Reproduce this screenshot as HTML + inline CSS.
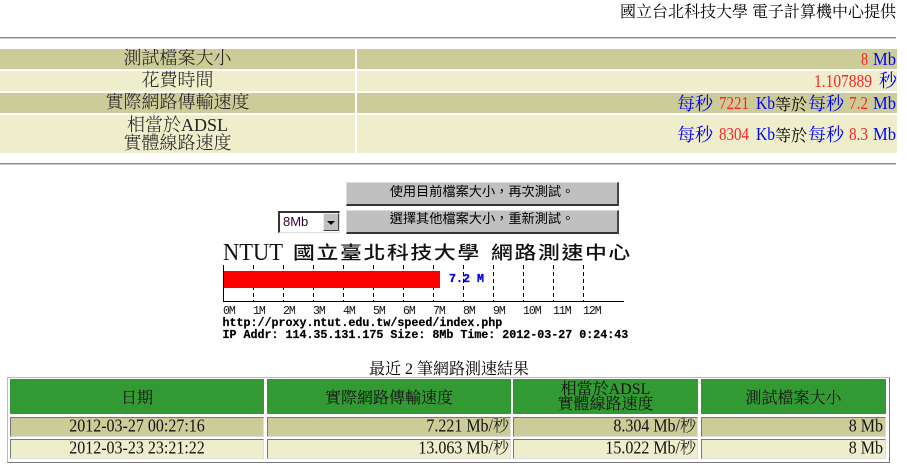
<!DOCTYPE html>
<html><head><meta charset="utf-8">
<style>
html,body{margin:0;padding:0;background:#fff;}
body{width:907px;height:468px;position:relative;overflow:hidden;font-family:"Liberation Serif","Noto Serif CJK SC",serif;color:#000;}
.a{position:absolute;white-space:nowrap;box-sizing:border-box;}
.hr{left:0;width:896px;height:2px;background:#8e8e8e;border-bottom:1px solid #c8c8c8;}
.c{font-size:18px;line-height:18px;font-weight:300;overflow:hidden;}
.l{text-align:center;color:#222;}
.d{background:#cc9;}.e{background:#eec;}
.btn{left:346px;width:273px;height:24px;background:#c0c0c0;border:1px solid;border-color:#ddd #444 #333 #ddd;border-width:1px 2px 2px 1px;font:13.2px/15px "Liberation Sans","Noto Sans CJK TC",sans-serif;text-align:center;padding-top:1px;color:#000;}
.t{border:1px solid;border-color:#777 #ddd #ddd #777;font-size:16px;line-height:18px;font-weight:300;color:#111;overflow:hidden;}
.t span{display:inline-block;transform:scaleY(1.15);}
.rt{text-align:right;padding-right:1px;}
.ct{text-align:center;}
.h{background:#393;display:flex;align-items:center;justify-content:center;text-align:center;white-space:nowrap;font-size:16px;color:#111;}
.bl{fill:#00f;font-size:18px;}
.rd{fill:#f22;font-size:18px;}
.bk{fill:#000;font-size:16px;}
</style></head><body>
<div class="a" style="right:11px;top:4px;font-size:16px;line-height:18px;">國立台北科技大學 電子計算機中心提供</div>
<div class="a hr" style="top:37px;"></div>

<div class="a c l d" style="left:0;top:49px;width:355px;height:20px;">測試檔案大小</div>
<div class="a c d" style="left:357px;top:49px;width:540px;height:20px;"></div>
<div class="a c l e" style="left:0;top:71px;width:355px;height:20px;">花費時間</div>
<div class="a c e" style="left:357px;top:71px;width:540px;height:20px;"></div>
<div class="a c l d" style="left:0;top:93px;width:355px;height:20px;">實際網路傳輸速度</div>
<div class="a c d" style="left:357px;top:93px;width:540px;height:20px;"></div>
<div class="a c l e" style="left:0;top:115px;width:355px;height:38px;padding-top:1px;">相當於ADSL<br>實體線路速度</div>
<div class="a c e" style="left:357px;top:115px;width:540px;height:38px;"></div>
<div class="a hr" style="top:163px;"></div>

<div class="a btn" style="top:182px;">使用目前檔案大小，再次測試。</div>
<div class="a btn" style="top:210px;padding-top:0;">選擇其他檔案大小，重新測試。</div>
<div class="a" style="left:278px;top:211px;width:62px;height:22px;border:1px solid;border-color:#333 #ddd #ddd #333;border-width:2px 1px 1px 2px;background:#fff;font:13px/18px 'Liberation Sans',sans-serif;padding-left:3px;color:#303;">8Mb
  <div class="a" style="right:0;top:0;width:16px;height:18px;background:#c0c0c0;border:1px solid;border-color:#eee #444 #444 #eee;"><div class="a" style="left:3px;top:7px;width:0;height:0;border:4px solid transparent;border-top:4px solid #000;border-bottom:0;"></div></div>
</div>

<svg class="a" style="left:0;top:0;" width="907" height="468" xmlns="http://www.w3.org/2000/svg">
  <g font-family="Liberation Serif, Noto Serif CJK SC, serif">
    <text transform="translate(861 65) scale(.78 1)" class="rd">8</text>
    <text transform="translate(873 65) scale(.92 1)" class="bl">Mb</text>
    <text transform="translate(814 87) scale(.86 1)" class="rd">1.107889</text>
    <text x="879" y="87" class="bl">秒</text>

    <text x="677" y="110" class="bl">每秒</text>
    <text transform="translate(719 109) scale(.833 1)" class="rd">7221</text>
    <text transform="translate(756 109) scale(.864 1)" class="bl">Kb</text>
    <text x="775" y="110" class="bk">等於</text>
    <text x="808" y="110" class="bl">每秒</text>
    <text transform="translate(849 109) scale(.844 1)" class="rd">7.2</text>
    <text transform="translate(873 109) scale(.92 1)" class="bl">Mb</text>

    <text x="677" y="141" class="bl">每秒</text>
    <text transform="translate(719 140) scale(.833 1)" class="rd">8304</text>
    <text transform="translate(756 140) scale(.864 1)" class="bl">Kb</text>
    <text x="775" y="141" class="bk">等於</text>
    <text x="808" y="141" class="bl">每秒</text>
    <text transform="translate(849 140) scale(.844 1)" class="rd">8.3</text>
    <text transform="translate(873 140) scale(.92 1)" class="bl">Mb</text>
  </g>

  <text transform="translate(223 260) scale(1 1.05)" font-family="Liberation Serif" font-size="23" textLength="60" lengthAdjust="spacingAndGlyphs" fill="#111">NTUT</text>
  <text transform="translate(293 259) scale(1.15 .95)" font-family="Noto Sans CJK TC" font-weight="500" font-size="19" letter-spacing="1.43" fill="#111">國立臺北科技大學</text>
  <text transform="translate(491 259) scale(1.15 .95)" font-family="Noto Sans CJK TC" font-weight="500" font-size="19" letter-spacing="1.43" fill="#111">網路測速中心</text>
  <path d="M253.500 265V301M283.500 265V301M313.500 265V301M343.500 265V301M373.500 265V301M403.500 265V301M433.500 265V301M463.500 265V301M493.500 265V301M523.500 265V301M553.500 265V301M583.500 265V301" stroke="#000" stroke-dasharray="4 3" fill="none"/>
  <rect x="223" y="271" width="217" height="17" fill="#f00"/>
  <path d="M223.500 265V302M223 301.500H624" stroke="#000" fill="none"/>
  <text x="449" y="282" font-family="Liberation Mono" font-weight="700" font-size="11.67" fill="#00d" stroke="#00d" stroke-width=".3">7.2 M</text>
  <g font-family="Liberation Mono" font-size="11.500" letter-spacing="-1" fill="#111">
    <text x="223" y="314">0M</text><text x="253" y="314">1M</text><text x="283" y="314">2M</text><text x="313" y="314">3M</text><text x="343" y="314">4M</text><text x="373" y="314">5M</text><text x="403" y="314">6M</text><text x="433" y="314">7M</text><text x="463" y="314">8M</text><text x="493" y="314">9M</text><text x="523" y="314">10M</text><text x="553" y="314">11M</text><text x="583" y="314">12M</text>
  </g>
  <g font-family="Liberation Mono" font-weight="700" font-size="11.67" fill="#000" stroke="#000" stroke-width=".2">
    <text x="222.500" y="326">http://proxy.ntut.edu.tw/speed/index.php</text>
    <text x="222.500" y="338">IP Addr: 114.35.131.175 Size: 8Mb Time: 2012-03-27 0:24:43</text>
  </g>
</svg>

<div class="a" style="left:369px;top:361px;font-size:16px;line-height:18px;">最近 2 筆網路測速結果</div>
<div class="a" style="left:7px;top:377px;width:883px;height:86px;border:1px solid;border-color:#bbb #777 #777 #bbb;"></div>

<div class="a h" style="left:10px;top:379px;width:254px;height:35px;">日期</div>
<div class="a h" style="left:267px;top:379px;width:244px;height:35px;">實際網路傳輸速度</div>
<div class="a h" style="left:513px;top:379px;width:185px;height:35px;line-height:15px;">相當於ADSL<br>實體線路速度</div>
<div class="a h" style="left:701px;top:379px;width:185px;height:35px;">測試檔案大小</div>

<div class="a t d ct" style="left:10px;top:417px;width:254px;height:20px;"><span>2012-03-27 00:27:16</span></div>
<div class="a t d rt" style="left:267px;top:417px;width:244px;height:20px;"><span>7.221 Mb/秒</span></div>
<div class="a t d rt" style="left:513px;top:417px;width:185px;height:20px;"><span>8.304 Mb/秒</span></div>
<div class="a t d rt" style="left:701px;top:417px;width:185px;height:20px;padding-right:2px;"><span>8 Mb</span></div>

<div class="a t e ct" style="left:10px;top:439px;width:254px;height:20px;"><span>2012-03-23 23:21:22</span></div>
<div class="a t e rt" style="left:267px;top:439px;width:244px;height:20px;"><span>13.063 Mb/秒</span></div>
<div class="a t e rt" style="left:513px;top:439px;width:185px;height:20px;"><span>15.022 Mb/秒</span></div>
<div class="a t e rt" style="left:701px;top:439px;width:185px;height:20px;padding-right:2px;"><span>8 Mb</span></div>
</body></html>
